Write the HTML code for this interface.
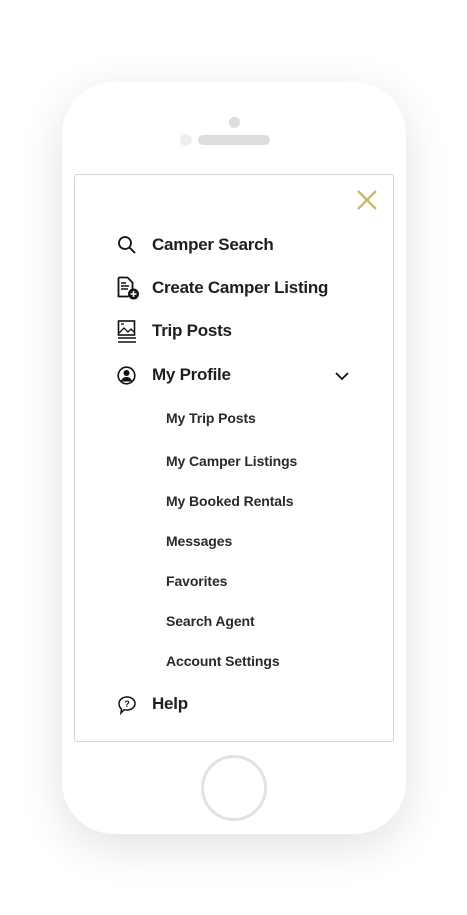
<!DOCTYPE html>
<html><head><style>
body{margin:0;width:467px;height:915px;background:#fff;position:relative;overflow:hidden;font-family:"Liberation Sans",sans-serif;}
.phone{position:absolute;left:62px;top:82px;width:344px;height:752px;border-radius:52px;background:#fff;box-shadow:0 12px 45px rgba(0,0,0,0.12);}
.screen{position:absolute;left:74px;top:174px;width:318px;height:566px;border:1px solid #d4d4d4;border-radius:3px;background:#fff;}
.t{position:absolute;color:#222;white-space:nowrap;line-height:20px;}
.m{font-size:17px;font-weight:bold;left:152px;letter-spacing:-0.25px;color:#1e1e1e;}
.s{font-size:14px;font-weight:bold;left:166px;color:#2a2a2a;letter-spacing:-0.1px;}
svg{position:absolute;}
</style></head><body>
<div class="phone"></div>
<div style="position:absolute;left:229px;top:117px;width:11px;height:11px;border-radius:50%;background:#ddd"></div>
<div style="position:absolute;left:180px;top:134px;width:12px;height:12px;border-radius:50%;background:#eee"></div>
<div style="position:absolute;left:198px;top:135px;width:72px;height:10px;border-radius:5px;background:#ddd"></div>
<div class="screen"></div>
<div style="position:absolute;left:201px;top:755px;width:60px;height:60px;border-radius:50%;border:3px solid #e2e2e2"></div>
<svg style="left:356px;top:189px" width="22" height="22" viewBox="0 0 22 22"><path d="M2 2L20 20M20 2L2 20" stroke="#cdb76a" stroke-width="2.3"/></svg>
<svg style="left:117px;top:235px" width="20" height="20" viewBox="0 0 20 20"><circle cx="8" cy="8" r="6" fill="none" stroke="#111" stroke-width="1.8"/><path d="M12.5 12.5L18 18" stroke="#111" stroke-width="1.9"/></svg>
<div class="t m" style="top:235px">Camper Search</div>
<svg style="left:117px;top:276px" width="24" height="24" viewBox="0 0 24 24"><path d="M1.5 1.5h9l5 5v8M1.5 1.5v19h10" fill="none" stroke="#111" stroke-width="1.8"/><path d="M4 7h5M4 10h8M4 13h7" stroke="#111" stroke-width="1.5"/><circle cx="16.5" cy="18" r="5.5" fill="#111"/><path d="M16.5 15v6M13.5 18h6" stroke="#fff" stroke-width="1.6"/></svg>
<div class="t m" style="top:278px">Create Camper Listing</div>
<svg style="left:117px;top:320px" width="20" height="24" viewBox="0 0 20 24"><rect x="1.5" y="1" width="16" height="14" fill="none" stroke="#111" stroke-width="1.6"/><path d="M2 13l5-5 4 4 3-3 3 3M4 4h3" fill="none" stroke="#111" stroke-width="1.3"/><path d="M1 18h18M1 22h18" stroke="#111" stroke-width="1.6"/></svg>
<div class="t m" style="top:321px">Trip Posts</div>
<svg style="left:117px;top:366px" width="19" height="19" viewBox="0 0 19 19"><circle cx="9.5" cy="9.5" r="8.3" fill="none" stroke="#111" stroke-width="1.6"/><circle cx="9.5" cy="7" r="3" fill="#111"/><path d="M3.8 15.5c1-3 3-4.5 5.7-4.5s4.7 1.5 5.7 4.5z" fill="#111"/></svg>
<div class="t m" style="top:365px">My Profile</div>
<svg style="left:334px;top:371px" width="16" height="10" viewBox="0 0 16 10"><path d="M2 2l6 6 6-6" fill="none" stroke="#111" stroke-width="1.8"/></svg>
<div class="t s" style="top:408px">My Trip Posts</div>
<div class="t s" style="top:451px">My Camper Listings</div>
<div class="t s" style="top:491px">My Booked Rentals</div>
<div class="t s" style="top:531px">Messages</div>
<div class="t s" style="top:571px">Favorites</div>
<div class="t s" style="top:611px">Search Agent</div>
<div class="t s" style="top:651px">Account Settings</div>
<svg style="left:117px;top:695px" width="20" height="20" viewBox="0 0 20 20"><path d="M10 2c4.5 0 8 2.8 8 6.5S14.5 15 10 15c-1 0-2 0-2.8-.3L4 18l.5-4C2.9 12.8 2 10.8 2 8.5 2 4.8 5.5 2 10 2z" fill="none" stroke="#111" stroke-width="1.5"/><text x="10" y="12" font-size="9" font-weight="bold" text-anchor="middle" font-family="Liberation Sans" fill="#111">?</text></svg>
<div class="t m" style="top:694px">Help</div>
</body></html>
